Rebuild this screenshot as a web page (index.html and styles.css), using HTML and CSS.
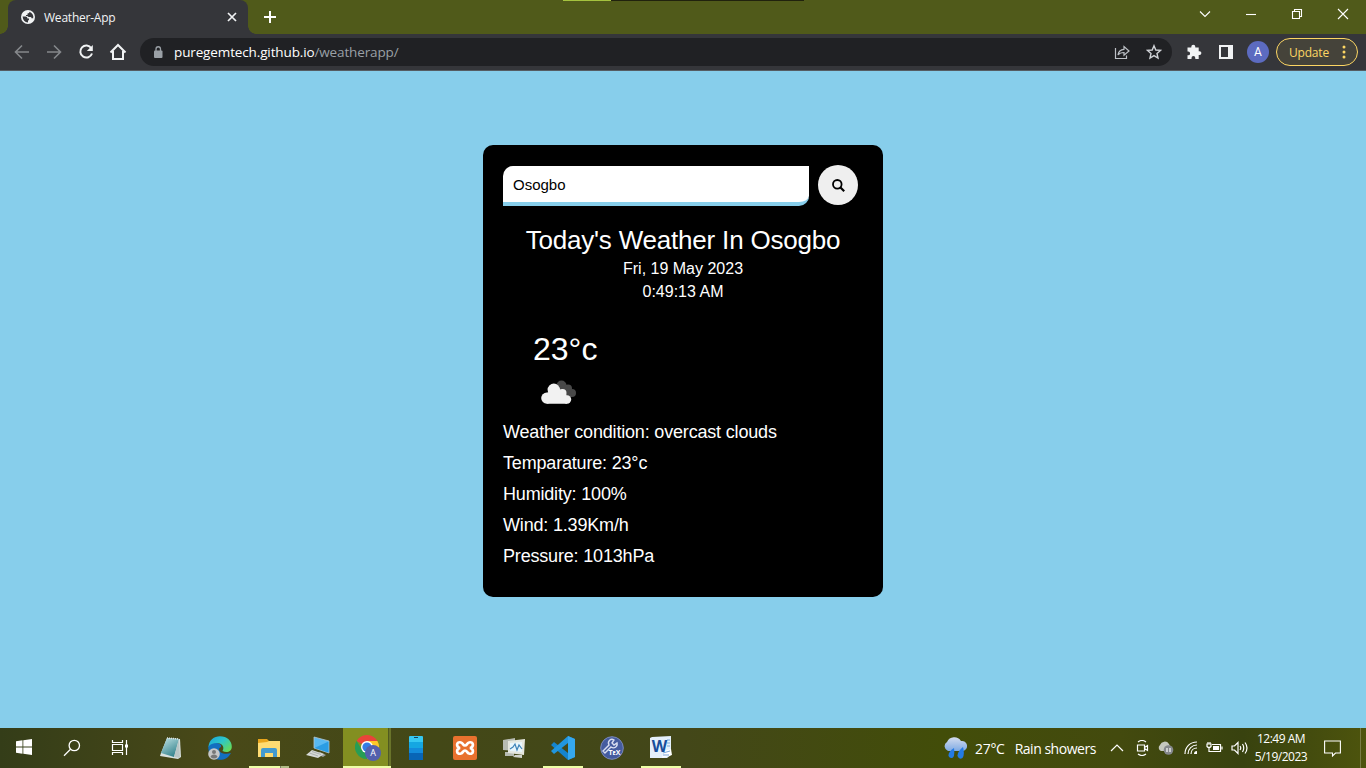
FILE: index.html
```html
<!DOCTYPE html>
<html lang="en">
<head>
<meta charset="utf-8">
<title>Weather-App</title>
<link rel="stylesheet" href="styles.css">
</head>
<body>
<div class="screen">
  <header class="tabstrip">
    <div class="tab">
      <svg class="globe" width="14" height="14" viewBox="0 0 14 14"><circle cx="7" cy="7" r="7" fill="#f1f3f4"/><path d="M1.600 6.500H4.500Q6.500 6.500 6.500 8.500H8V9.500Q8 10.300 7 10.500V12.400Q2 12 1.600 6.500ZM8.500 1.800Q8.800 3.500 6.500 3.500V5H5V6Q7 5.500 7.500 7H9.500Q10.500 7 10.500 8.300H12.200Q13 4 8.500 1.800Z" fill="#35363a"/></svg>
      <span class="tab-title">Weather-App</span>
      <svg class="tab-close" width="10" height="10" viewBox="0 0 10 10" stroke="#f1f3f4" stroke-width="1.700"><path d="M1 1L9 9M9 1L1 9"/></svg>
    </div>
    <svg class="new-tab" width="12" height="12" viewBox="0 0 12 12" stroke="#fff" stroke-width="2"><path d="M6 0V12M0 6H12"/></svg>
    <div class="loadbar"><i></i></div>
    <div class="window-controls">
      <svg width="12" height="12" viewBox="0 0 12 12"><path d="M1 3.500L6 8.500L11 3.500"/></svg>
      <svg width="12" height="12" viewBox="0 0 12 12"><path d="M1 6.500H11"/></svg>
      <svg width="12" height="12" viewBox="0 0 12 12"><path d="M1.500 3.500H8.500V10.500H1.500ZM3.500 3.500V1.500H10.500V8.500H8.500"/></svg>
      <svg width="12" height="12" viewBox="0 0 12 12"><path d="M1 1L11 11M11 1L1 11"/></svg>
    </div>
  </header>

  <nav class="toolbar">
    <div class="nav-icons">
      <svg class="dim" width="16" height="16" viewBox="0 0 16 16"><path d="M15 8H2M8 1.500L1.500 8L8 14.500"/></svg>
      <svg class="dim" width="16" height="16" viewBox="0 0 16 16"><path d="M1 8H14M8 1.500L14.500 8L8 14.500"/></svg>
      <svg width="16" height="16" viewBox="0 0 16 16"><path d="M13.300 4.200A6 6 0 1 0 14 9.500"/><path d="M14.800 1V7H8.800Z" fill="#f1f3f4" stroke="none"/></svg>
      <svg width="18" height="18" viewBox="0 0 18 18"><path d="M1.500 9.500L9 2L16.500 9.500M4 8V16H14V8"/></svg>
    </div>
    <div class="omnibox">
      <svg width="10" height="13" viewBox="0 0 10 13"><rect x="1" y="4.500" width="8.500" height="7.500" rx="1" fill="#9aa0a6"/><path d="M3 5V3A2.250 2.250 0 0 1 7.500 3V5" fill="none" stroke="#9aa0a6" stroke-width="1.300"/></svg>
      <span class="url"><span class="host">puregemtech.github.io</span><span class="path">/weatherapp/</span></span>
      <svg class="share" width="16" height="16" viewBox="0 0 16 16" fill="none" stroke="#bdc1c6" stroke-width="1.200"><path d="M1.500 4V14.500H12.500V11.500M4 11C4.500 7.500 6.500 5.500 10 5.300V2.500L15 7L10 11.300V8.500C7.500 8.500 5.500 9 4 11Z"/></svg>
      <svg width="16" height="16" viewBox="0 0 16 16" fill="none" stroke="#d0d3d7" stroke-width="1.400"><path d="M8 1.700L9.800 6L14.500 6.400L11 9.500L12 14L8 11.600L4 14L5 9.500L1.500 6.400L6.200 6Z"/></svg>
    </div>
    <svg class="puzzle" width="16" height="16" viewBox="0 0 16 16" fill="#f1f3f4"><path d="M1.500 3.500H5.300V2.700A2 2 0 0 1 9.300 2.700V3.500H12.700V7.200H13.500A1.900 1.900 0 0 1 13.500 11H12.700V15H9.300V14A1.900 1.900 0 0 0 5.500 14V15H1.500V11.300H2.200A1.900 1.900 0 0 0 2.200 7.500H1.500Z"/></svg>
    <svg class="panel" width="14" height="14" viewBox="0 0 14 14"><rect width="14" height="14" fill="#f1f3f4"/><rect x="2" y="2" width="7" height="10" fill="#35363a"/></svg>
    <div class="avatar">A</div>
    <div class="update"><span>Update</span><svg width="4" height="14" viewBox="0 0 4 14" fill="#fdd663"><circle cx="2" cy="2" r="1.500"/><circle cx="2" cy="7" r="1.500"/><circle cx="2" cy="12" r="1.500"/></svg></div>
  </nav>

  <main class="page">
    <section class="card">
      <form class="search">
        <input class="city" type="text" value="Osogbo">
        <button class="go" type="button" aria-label="Search"><svg width="13" height="13" viewBox="0 0 13 13" fill="none" stroke="#000"><circle cx="5.300" cy="5.300" r="4.300" stroke-width="1.800"/><path d="M8.500 8.500L12.200 12.200" stroke-width="2.200"/></svg></button>
      </form>
      <h1 class="title">Today's Weather In Osogbo</h1>
      <p class="date">Fri, 19 May 2023</p>
      <p class="time">0:49:13 AM</p>
      <p class="temp">23°c</p>
      <svg class="cloud" width="36" height="24" viewBox="0 0 36 24"><g fill="#484848"><circle cx="20.500" cy="5.500" r="5"/><circle cx="27" cy="8.500" r="4"/><circle cx="31" cy="13" r="4"/><path d="M17 6H26L31 17H25Z"/></g><g fill="#f2f2f2"><circle cx="12.800" cy="9.800" r="6.200"/><circle cx="5.800" cy="18.100" r="5.600"/><circle cx="21.500" cy="13" r="4"/><circle cx="26" cy="19.500" r="4.200"/><path d="M5.800 23.700V13L13 9L22 10L25.500 15L26 23.700Z"/></g></svg>
      <div class="details">
        <p>Weather condition: overcast clouds</p>
        <p>Temparature: 23°c</p>
        <p>Humidity: 100%</p>
        <p>Wind: 1.39Km/h</p>
        <p>Pressure: 1013hPa</p>
      </div>
    </section>
  </main>

  <footer class="taskbar">
    <div class="system">
      <div><svg width="16" height="16" viewBox="0 0 16 16" fill="#fff"><path d="M0 2.200L6.500 1.300V7.500H0ZM7.300 1.200L16 0V7.500H7.300ZM0 8.400H6.500V14.700L0 13.800ZM7.300 8.400H16V16L7.300 14.800Z"/></svg></div>
      <div><svg width="18" height="18" viewBox="0 0 18 18" fill="none" stroke="#fff" stroke-width="1.300"><circle cx="11.300" cy="6.500" r="5.200"/><path d="M7.500 10.300L1 16.800"/></svg></div>
      <div><svg width="18" height="18" viewBox="0 0 18 18" fill="none" stroke="#fff" stroke-width="1.200"><path d="M1.500 1V3.500H11.500V1M1.500 16V13.500H11.500V16M1.500 5.500H11.500V11.500H1.500ZM15.500 1V16"/><path d="M14 5.500H17V8.500H14Z" fill="#fff" stroke="none"/></svg></div>
    </div>
    <div class="apps">
      <div class="app"><svg width="24" height="24" viewBox="0 0 24 24"><defs><linearGradient id="note" x1="0" y1="0" x2=".6" y2="1"><stop stop-color="#c3e4e6"/><stop offset="1" stop-color="#36858f"/></linearGradient></defs><path d="M8 2L21 3L22 21L19 23L1 20L2 17Z" fill="#d9e2df"/><path d="M8 2L20 3L15 21L2 17Z" fill="url(#note)"/><path d="M20 3L21 22L15 21Z" fill="#b9c6c6"/><path d="M8 2L20 3" stroke="#dce7e8" stroke-width="1.500" stroke-dasharray="1 1"/></svg></div>
      <div class="app"><svg width="24" height="24" viewBox="0 0 24 24"><defs><linearGradient id="edgeTop" x1="0" y1="0" x2="1" y2=".8"><stop stop-color="#19a5dc"/><stop offset=".5" stop-color="#2cc6ca"/><stop offset="1" stop-color="#69dc53"/></linearGradient></defs><path d="M.5 10Q3 6 9 7Q14 8 13 11C8 13 13 20 23 17C19 25 9 26 3 20Q-.5 15 .5 10Z" fill="#126fc0"/><path d="M.5 11C1 4 6 .3 12 .3C19 .3 24 5 23.800 11C23.500 15.500 19 17.500 14.500 15C17 11 14 7 9 7C5 7 2 8 .5 11Z" fill="url(#edgeTop)"/><circle cx="6" cy="18" r="5.800" fill="#c6c7c7"/><circle cx="6" cy="16" r="2" fill="#777"/><path d="M2.500 21Q3 18.500 6 18.500T9.500 21Q6 24 2.500 21Z" fill="#777"/></svg></div>
      <div class="app folder"><svg width="24" height="24" viewBox="0 0 24 24"><path d="M1 3H10L12 5H23V21H1Z" fill="#e8a51c"/><path d="M1 7L10 6L12 5H23V21H1Z" fill="#ffdc72"/><path d="M4 21V14Q4 12 6 12H18Q20 12 20 14V21H16V17H8V21Z" fill="#439bd0"/></svg></div>
      <div class="app"><svg width="24" height="24" viewBox="0 0 24 24"><path d="M8 1L23 5V17L8 12Z" fill="#58b9f2" stroke="#b5c5cc" stroke-width=".8"/><path d="M8.500 12L22.500 5.500V16.500Z" fill="#2b9de4"/><path d="M14 16L20 19L17 21L11 18Z" fill="#999e9b"/><path d="M6 14L18 18L12 22L0 19Z" fill="#d7dad7"/><path d="M6 15.500L15 18.500M3.500 17L12 20" stroke="#a5aaa6" stroke-width=".8"/></svg></div>
      <div class="app chrome"><svg width="28" height="26" viewBox="0 0 28 26"><path d="M12 12L1.600 6A12 12 0 0 1 22.400 6Z" fill="#e9443a"/><path d="M12 12L12 6H22.400A12 12 0 0 1 12 24Z" fill="#fdc828"/><path d="M12 12L12 24A12 12 0 0 1 1.600 6L7 15Z" fill="#279d55"/><circle cx="12" cy="12" r="6" fill="#fff"/><circle cx="12" cy="12" r="4.600" fill="#337ce5"/><circle cx="18" cy="18" r="8" fill="#5360ad"/><text x="18" y="21.200" text-anchor="middle" font-size="9" fill="#fff">A</text></svg></div>
      <div class="app"><svg width="24" height="24" viewBox="0 0 24 24"><rect x="5" width="14" height="24" rx="1" fill="#36c8f2"/><path d="M5 6H19V24H5Z" fill="#15a7e2"/><path d="M5 12H19V24H5Z" fill="#138bdb"/><path d="M5 17H19V24H5Z" fill="#0865b6"/><path d="M10 1.500H14" stroke="#17445c"/></svg></div>
      <div class="app"><svg width="24" height="24" viewBox="0 0 24 24"><rect width="24" height="24" rx="2" fill="#e8712e"/><path d="M8 6.500C3 5 3 11 7 12C3 13 3 19 8 17.500C10 17 10 14.500 12 14.500S14 17 16 17.500C21 19 21 13 17 12C21 11 21 5 16 6.500C14 7 14 9.500 12 9.500S10 7 8 6.500Z" fill="none" stroke="#fff" stroke-width="2.700"/></svg></div>
      <div class="app"><svg width="24" height="24" viewBox="0 0 24 24"><path d="M1 4L13 2V15L1 14ZM3 16H12V20H3Z" fill="#b7bbb2"/><path d="M6 5L23 3L22 19L6 17Z" fill="#e5e7df"/><path d="M8 7L20 6V16L8 15Z" fill="#e9f6fc"/><path d="M8 13L11 11L13 8L15 14L17 9L20 13" fill="none" stroke="#3e83b8" stroke-width="1.200"/><path d="M13 19H20V22L11 21Z" fill="#d2d4cc"/></svg></div>
      <div class="app running"><svg width="24" height="24" viewBox="0 0 24 24"><path d="M17 0L24 3V21L17 24L0 9L3 6L17 17Z" fill="#1584cd"/><path d="M17 0V7L3 18L0 15Z" fill="#2196df"/><path d="M17 0L24 3V21L17 24Z" fill="#35a8ef"/></svg></div>
      <div class="app"><svg width="24" height="24" viewBox="0 0 24 24"><circle cx="12" cy="12" r="11.300" fill="#455c9f" stroke="#7b8abb"/><path d="M3 15L9 9C7 5 11 2 14 4L12 7L14 9L17 7C18 11 14 13 11 11L5 17Z" fill="none" stroke="#d9def0" stroke-width="1.400"/><text x="14.500" y="19" text-anchor="middle" font-size="7" font-weight="700" fill="#fff">TᴇX</text></svg></div>
      <div class="app running"><svg class="word" width="24" height="24" viewBox="0 0 24 24"><path d="M3 1L22 0V19L18 22H1V2Z" fill="#e4f0fb"/><path d="M15 15L22 13L23 19L13 22Z" fill="#fff"/><path d="M18 4H21M18 7H21M18 10H21M14 17L21 15M14 19H20" stroke="#79a5d7"/><text x="10.500" y="16" text-anchor="middle" font-size="16" font-weight="700" fill="#174e9b">W</text></svg></div>
    </div>
    <div class="weather">
      <svg width="24" height="22" viewBox="0 0 24 22"><defs><linearGradient id="rain" x2="0" y2="1"><stop stop-color="#d3dcef"/><stop offset="1" stop-color="#7eaae4"/></linearGradient></defs><path d="M5 14A5 5 0 0 1 4 5A8 8 0 0 1 18 4A5 5 0 0 1 20 14Z" fill="url(#rain)"/><path d="M11 11Q5 15 5.500 19Q7 22 10 20.500Q12 19 11 11ZM20 10Q14 15 14.500 19Q16 23 19.500 21Q22 18 20 10Z" fill="#247be4"/></svg>
      <span class="degrees">27°C</span><span class="condition">Rain showers</span>
    </div>
    <div class="tray">
      <svg width="14" height="8" viewBox="0 0 14 8"><path d="M1 7L7 1L13 7"/></svg>
      <svg width="14" height="16" viewBox="0 0 14 16"><path d="M3 2Q7 -1 11 2M3 14Q7 17 11 14M2.500 5H9.500V11H2.500ZM9.500 7.500L12.500 5.500V10.500L9.500 8.500"/></svg>
      <svg class="filled" width="17" height="14" viewBox="0 0 17 14"><path d="M4 10A3.500 3.500 0 0 1 3 4A5 5 0 0 1 12 3L14 7L10 10Z" fill="#c5c8bf"/><circle cx="11.500" cy="9" r="4.800" fill="#85888c"/><path d="M10 7V11M13 7V11" stroke="#fff" stroke-width="1.200"/></svg>
      <svg width="14" height="14" viewBox="0 0 14 14"><path d="M1 13C1 6 6 1 13 1M4 13C4 8 8 4 13 4M7 13C7 9.500 9.500 7 13 7"/><path d="M10 13C10 11 11 10 13 10V13Z" fill="#fff" stroke="none"/></svg>
      <svg width="17" height="13" viewBox="0 0 17 13"><path d="M6 2.500H14.500V9.500H4M1 2H5V4.500Q3 6.500 1 4.500ZM2 0V2M4 0V2M3 6V9.500H6M16 4.500V7.500"/><path d="M7 4H13V8H7Z" fill="#fff" stroke="none"/></svg>
      <svg width="17" height="14" viewBox="0 0 17 14"><path d="M1 5H3.500L7 1.500V12.500L3.500 9H1ZM9 5Q10.500 7 9 9M11.500 3Q14 7 11.500 11M14 1.500Q18 7 14 12.500"/></svg>
    </div>
    <div class="clock"><span>12:49 AM</span><span>5/19/2023</span></div>
    <svg class="notice" width="17" height="17" viewBox="0 0 17 17" fill="none" stroke="#fff" stroke-width="1.100"><path d="M.600 1H16.400V13H11.500L8.500 16V13H.600Z"/></svg>
    <i class="desktop-edge"></i>
  </footer>
</div>
</body>
</html>
```
FILE: styles.css
```css
* { box-sizing: border-box; }
body { margin: 0; overflow: hidden; }
p, h1 { margin: 0; font-weight: 400; }
svg { display: block; flex: none; }
.screen { width: 1366px; height: 768px; display: flex; flex-direction: column; font-family: "Open Sans", "Noto Sans", sans-serif; }

.tabstrip { position: relative; height: 34px; flex: none; display: flex; align-items: center; background: #505a1a; padding-left: 8px; }
.tab { position: relative; width: 240px; height: 34px; display: flex; align-items: center; background: #35363a; border-radius: 8px 8px 0 0; padding: 0 11px 0 13px; color: #f1f3f4; font-size: 12px; }
.tab::before, .tab::after { content: ""; position: absolute; bottom: 0; width: 8px; height: 8px; }
.tab::before { left: -8px; background: radial-gradient(circle at 0 0, transparent 7.5px, #35363a 8px); }
.tab::after { right: -8px; background: radial-gradient(circle at 100% 0, transparent 7.5px, #35363a 8px); }
.tab-title { margin-left: 9px; letter-spacing: -.22px; }
.tab-close { margin-left: auto; }
.new-tab { margin-left: 16px; }
.loadbar { position: absolute; left: 563px; top: 0; width: 241px; height: 1px; background: #20220d; }
.loadbar i { display: block; width: 48px; height: 1px; background: #a5c33f; }
.window-controls { margin-left: auto; display: flex; gap: 34px; padding: 0 17px 6px 0; }
.window-controls svg { fill: none; stroke: #fff; stroke-width: 1.1; }

.toolbar { height: 37px; flex: none; display: flex; align-items: center; background: #35363a; border-bottom: 1px solid #555c62; padding: 0 8px 0 14px; }
.nav-icons { display: flex; align-items: center; gap: 16px; width: 126px; }
.nav-icons svg { fill: none; stroke: #f1f3f4; stroke-width: 2; }
.nav-icons svg:last-child { margin-left: -1px; }
.nav-icons .dim { stroke: #85888b; stroke-width: 1.6; }
.omnibox { width: 1032px; height: 28px; display: flex; align-items: center; background: #202124; border-radius: 14px; padding: 0 10px 0 13px; }
.url { margin-left: 11px; font-size: 13.5px; line-height: 20px; letter-spacing: -.13px; white-space: nowrap; }
.host { color: #fff; }
.path { color: #9aa0a6; }
.share { margin: 0 16px 0 auto; }
.puzzle { margin-left: 14px; }
.panel { margin-left: 17px; }
.avatar { width: 22px; height: 22px; margin-left: 14px; border-radius: 50%; background: #5c6bc0; color: #fff; font: 12px/22px Roboto, sans-serif; text-align: center; }
.update { width: 82px; height: 28px; margin-left: 7px; border: 1px solid #fdd663; border-radius: 14px; background: #45433a; color: #fdd663; display: flex; align-items: center; justify-content: space-between; padding: 0 11px 0 12px; font-size: 12px; letter-spacing: -.2px; }

.page { flex: 1; background: #87ceeb; display: flex; justify-content: center; align-items: flex-start; padding-top: 74px; font-family: "Liberation Sans", Arial, sans-serif; }
.card { width: 400px; height: 452px; padding: 20px; border-radius: 10px; background: #000; color: #fff; }
.search { display: flex; gap: 9px; }
.city { width: 306px; height: 40px; margin-top: 1px; padding: 0 10px; border: 0; border-bottom: 4px solid #87ceeb; border-radius: 10px 0; background: #fff; color: #000; font: 15px "Liberation Sans", Arial, sans-serif; outline: 0; }
.go { width: 40px; height: 40px; border: 0; border-radius: 50%; background: #efefef; padding: 0; display: flex; align-items: center; justify-content: center; }
.title { margin-top: 19px; text-align: center; font-size: 26px; line-height: 30px; letter-spacing: -.2px; }
.date, .time { text-align: center; font-size: 16px; line-height: 23px; }
.date { margin-top: 2px; }
.temp { margin: 27px 0 0 30px; font-size: 32px; line-height: 38px; }
.cloud { margin: 12px 0 0 38px; }
.details { margin-top: 13px; font-size: 18px; line-height: 31px; letter-spacing: -.18px; }

.taskbar { height: 40px; flex: none; display: flex; align-items: center; background: linear-gradient(90deg, #343d18, #494918 16%, #434817 31%, #434719 50%, #424d09 69%, #434a0e 82%, #38420f 91%, #4d540d); color: #fff; }
.system { display: flex; }
.system div { width: 48px; display: flex; justify-content: center; }
.apps { display: flex; margin-left: 2px; }
.app { position: relative; width: 49px; height: 40px; display: flex; align-items: center; justify-content: center; }
.running::after, .folder::after { content: ""; position: absolute; bottom: 0; left: 5px; width: 40px; height: 2px; background: #edffa6; }
.folder::after { background: linear-gradient(90deg, #edffa6 31px, #7b8063 31px 32px, #b2bc86 32px); }
.chrome { background: linear-gradient(90deg, transparent 1px, #838f21 1px 46px, #505920 46px 47px, #69742a 47px); padding-left: 4px; }
.chrome::after { content: ""; position: absolute; bottom: 0; left: 1px; width: 48px; height: 2px; background: #edffa6; }
.word { overflow: visible; }
.weather { margin-left: 258px; display: flex; align-items: center; font-size: 14px; width: 152px; white-space: nowrap; }
.degrees { margin-left: 8px; letter-spacing: -.3px; }
.condition { margin-left: 10px; letter-spacing: -.48px; }
.tray { display: flex; align-items: center; gap: 9px; margin-left: 15px; width: 135px; }
.tray svg { fill: none; stroke: #fff; stroke-width: 1.2; }
.tray svg:nth-child(n+2) { margin-right: -1px; }
.tray svg:nth-child(2) { margin-left: 2px; }
.tray .filled { stroke: none; }
.tray svg:nth-child(4) { margin-left: 2px; }
.clock { width: 68px; margin-left: 2px; display: flex; flex-direction: column; align-items: center; font-size: 12px; line-height: 18px; letter-spacing: -.5px; white-space: nowrap; }
.notice { margin-left: 9px; }
.desktop-edge { width: 1px; height: 40px; margin-left: 19px; background: #777d44; }
```
